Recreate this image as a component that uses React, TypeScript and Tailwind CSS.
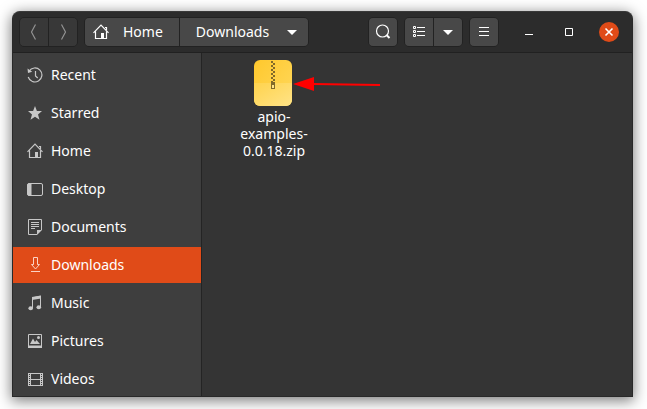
import type { ReactNode } from "react";

function Icon({ children, className = "" }: { children: ReactNode; className?: string }) {
  return (
    <svg viewBox="0 0 16 16" className={`size-4 shrink-0 ${className}`} fill="none" stroke="currentColor" aria-hidden="true">
      {children}
    </svg>
  );
}

const HomeIcon = () => (
  <Icon>
    <path d="M.5 8.8 8 1.2l7.5 7.6M2.5 7.5v7h11v-7M13.5 6V3.5H12" strokeWidth="1.2" />
    <path d="M8 9h3v6H8z" fill="currentColor" stroke="none" />
  </Icon>
);

const RecentIcon = () => (
  <Icon>
    <path d="M2 4.2A7 7 0 1 1 1.2 10M8.5 4v5l2.2 2" strokeWidth="1.2" />
    <path d="M.5 1.5 1 6l4.2-1.3z" fill="currentColor" stroke="none" />
  </Icon>
);

const StarIcon = () => (
  <Icon>
    <path d="M8 1 9.9 6H15l-4 3.4 1.5 5.4L8 11.8l-4.500 3L5 9.400 1 6h5.100z" fill="currentColor" stroke="none" />
  </Icon>
);

const DesktopIcon = () => (
  <Icon>
    <rect x=".5" y="2.5" width="15" height="12" rx="1.5" />
    <path d="M1 3h3v11H1z" fill="currentColor" />
  </Icon>
);

const DocumentIcon = () => (
  <Icon>
    <path d="M10 15.5H1.5V.5h13V11M4 3.5h8M4 5.5h8M4 7.5h8M4 9.5h4" />
    <path d="M10 16v-5h5z" fill="currentColor" stroke="none" />
  </Icon>
);

const DownloadIcon = () => (
  <Icon>
    <path d="M6.5.5h4v7h2L8.5 12l-4-4.5h2zM4 14.5h9" />
  </Icon>
);

const MusicIcon = () => (
  <Icon>
    <path d="M5.5 13V2.8l8-1.6V12" />
    <path d="M5 2 14 .5v3L5 5z" fill="currentColor" stroke="none" />
    <ellipse cx="3.7" cy="13.2" rx="2.3" ry="2" fill="currentColor" stroke="none" />
    <ellipse cx="11.8" cy="12.2" rx="2.3" ry="2" fill="currentColor" stroke="none" />
  </Icon>
);

const PictureIcon = () => (
  <Icon>
    <path d="M1.5 1.5h13v13h-13z" />
    <path d="M1 12.500h14V15H1zM3 11l3-5.500L8 9l1.500-2 3.500 4z" fill="currentColor" stroke="none" />
    <circle cx="11.5" cy="4.500" r="1.500" fill="currentColor" stroke="none" />
  </Icon>
);

const VideoIcon = () => (
  <Icon>
    <path d="M3.500 2v13M13.500 2v13M3 2.500h11M3 8.500h11M3 14.500h11" />
    <path d="M1.500 2v13M15.500 2v13" />
    <path d="M2.500 2v13M14.500 2v13" strokeDasharray="1 1" />
  </Icon>
);

const CaretIcon = () => (
  <Icon>
    <path d="M3 6h10L8 11z" fill="currentColor" stroke="none" />
  </Icon>
);

const places = [
  { name: "Recent", icon: <RecentIcon /> },
  { name: "Starred", icon: <StarIcon /> },
  { name: "Home", icon: <HomeIcon /> },
  { name: "Desktop", icon: <DesktopIcon /> },
  { name: "Documents", icon: <DocumentIcon /> },
  { name: "Downloads", icon: <DownloadIcon />, active: true },
  { name: "Music", icon: <MusicIcon /> },
  { name: "Pictures", icon: <PictureIcon /> },
  { name: "Videos", icon: <VideoIcon /> },
];

const group = "flex h-[30px] divide-x divide-[#222222] overflow-hidden rounded-[5px] border border-[#222222]";
const tool = "flex w-7 items-center justify-center bg-[#484848] box-content";
const nav = "flex w-7 items-center justify-center bg-[#383838] text-[#929292] box-content";
const titleButton = "flex size-5 items-center justify-center rounded-full";

function HeaderBar() {
  return (
    <header className="flex items-center gap-1.5 rounded-t-[7px] border-b border-[#212121] bg-[#2c2c2c] py-[5px] pr-[13px] pl-1.5">
      <div className={group}>
        <button className={nav} aria-label="Back">
          <Icon><path d="M9.500.5 5.500 8l4 7.500" strokeWidth="1.2" /></Icon>
        </button>
        <button className={nav} aria-label="Forward">
          <Icon><path d="m6.500.5 4 7.500-4 7.500" strokeWidth="1.2" /></Icon>
        </button>
      </div>
      <nav className={group} aria-label="Path">
        <button className="flex items-center gap-3.5 bg-[#484848] pr-4 pl-2">
          <HomeIcon />
          Home
        </button>
        <button className="flex items-center gap-[15px] bg-[#484848] pr-2 pl-4">
          Downloads
          <CaretIcon />
        </button>
      </nav>
      <div className={`${group} ml-auto`}>
        <button className={tool} aria-label="Search">
          <Icon>
            <circle cx="7.500" cy="7" r="6" strokeWidth="1.2" />
            <path d="m11.500 11 3 3" strokeWidth="2" />
          </Icon>
        </button>
      </div>
      <div className={group}>
        <button className={tool} aria-label="List view">
          <Icon>
            <path d="M2.500 2.500h2v2h-2zM2.500 6.500h2v2h-2zM2.500 10.500h2v2h-2zM6 3.500h8M6 7.500h8M6 11.500h8" />
          </Icon>
        </button>
        <button className={tool} aria-label="View options">
          <CaretIcon />
        </button>
      </div>
      <div className={group}>
        <button className={tool} aria-label="Menu">
          <Icon><path d="M3 3.500h10M3 7.500h10M3 11.500h10" /></Icon>
        </button>
      </div>
      <div className="ml-3.5 flex gap-5">
        <button className={titleButton} aria-label="Minimize">
          <Icon><path d="M4 10.500h8" /></Icon>
        </button>
        <button className={titleButton} aria-label="Maximize">
          <Icon><path d="M4.500 4.500h7v7h-7z" /></Icon>
        </button>
        <button className={`${titleButton} bg-[#e04b18]`} aria-label="Close">
          <Icon><path d="m4.500 4.500 7 7m0-7-7 7" strokeWidth="1.6" /></Icon>
        </button>
      </div>
    </header>
  );
}

function ZipIcon() {
  return (
    <svg viewBox="0 0 38 46" className="mr-0.5 h-[46px] w-[38px]" aria-hidden="true">
      <defs>
        <linearGradient id="zip-top" x1="0" y1="0" x2="1" y2="1">
          <stop stopColor="#ffc82c" />
          <stop offset="1" stopColor="#ffd95f" />
        </linearGradient>
        <linearGradient id="zip-bottom" x1="0" y1="0" x2="1" y2="1">
          <stop stopColor="#ffd34d" />
          <stop offset="1" stopColor="#ffe387" />
        </linearGradient>
      </defs>
      <rect width="38" height="46" rx="6" fill="url(#zip-top)" />
      <path d="M0 23h38v17a6 6 0 0 1-6 6H6a6 6 0 0 1-6-6z" fill="url(#zip-bottom)" />
      <path d="M18 1v21" stroke="#81692a" strokeWidth="2" strokeDasharray="2 2" />
      <path d="M20 3v19" stroke="#81692a" strokeWidth="2" strokeDasharray="2 2" />
      <path d="M17 22h4v7h-4z" fill="#81692a" />
      <path d="M18 25h2v3h-2z" fill="#ffe387" />
    </svg>
  );
}

export default function App() {
  return (
    <div className="flex h-screen bg-white pt-[11px] pr-3.5 pb-3 pl-3 font-['Noto_Sans',sans-serif] text-sm text-white">
      <div className="flex grow flex-col rounded-t-lg border border-[#292929] border-t-[#393939] bg-[#343434] shadow-[0_3px_14px_1px_rgba(0,0,0,0.5)]">
        <HeaderBar />
        <div className="flex min-h-0 grow">
          <aside className="w-[189px] shrink-0 overflow-hidden border-r border-[#242424] bg-[#3e3e3e] pt-1">
            <ul className="flex flex-col gap-0.5">
              {places.map((place) => (
                <li key={place.name}>
                  <button
                    className={`flex h-9 w-full items-center gap-2 pl-3.5 text-left ${place.active ? "bg-[#e04b18]" : ""}`}
                    aria-current={place.active ? "page" : undefined}
                  >
                    <span className={place.active ? "text-[#fbd2c4]" : "text-[#c7c7c7]"}>{place.icon}</span>
                    {place.name}
                  </button>
                </li>
              ))}
            </ul>
          </aside>
          <main className="flex grow items-start pt-[7px] pl-6">
            <button className="relative flex w-24 flex-col items-center gap-0.5 leading-[17px]">
              <ZipIcon />
              <span>
                apio-
                <br />
                examples-
                <br />
                0.0.18.zip
              </span>
              <svg viewBox="0 0 88 16" className="absolute top-4 left-[67px] h-4 w-[88px]" aria-hidden="true">
                <path d="M20 8l67 1" stroke="#ff0000" strokeWidth="2" />
                <path d="M0 8 21 1v14z" fill="#ff0000" />
              </svg>
            </button>
          </main>
        </div>
      </div>
    </div>
  );
}
